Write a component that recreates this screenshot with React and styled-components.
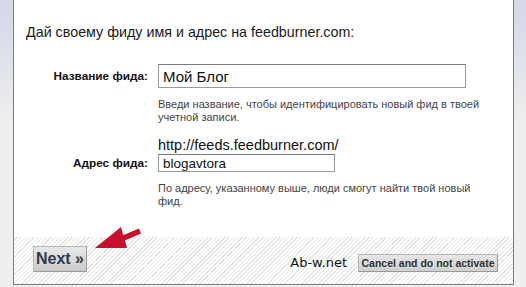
import React from 'react';
import styled, { createGlobalStyle } from 'styled-components';

const GlobalStyle = createGlobalStyle`
  html, body {
    margin: 0;
    padding: 0;
  }
  body {
    width: 526px;
    height: 287px;
    overflow: hidden;
    background: linear-gradient(#d3d7e8 0, #e2e4ec 70px, #eeeeee 120px, #efefef 100%);
    font-family: 'Liberation Sans', Arial, sans-serif;
  }
`;

const Panel = styled.div`
  margin-left: 13px;
  width: 499px;
  height: 284px;
  background: #ffffff;
  border: 1px solid #7c7c7c;
  border-top: none;
  display: flex;
  flex-direction: column;
`;

const Content = styled.div`
  flex: 1;
  padding: 23px 12px 0 12px;
`;

const Title = styled.div`
  font-size: 14.3px;
  line-height: 18px;
  color: #1a1a1a;
  margin-bottom: 23px;
`;

const Field = styled.div`
  display: grid;
  grid-template-columns: 122px 1fr;
  column-gap: 10px;
  align-items: center;
  margin-bottom: ${(p) => p.$gap || 0}px;
`;

const Label = styled.label`
  grid-column: 1;
  text-align: right;
  font-size: 11.8px;
  font-weight: bold;
  color: #111;
`;

const Prefix = styled.div`
  grid-column: 2;
  font-size: 14.5px;
  line-height: 18px;
  color: #111;
`;

const Input = styled.input`
  grid-column: 2;
  box-sizing: border-box;
  width: ${(p) => p.$width}px;
  height: ${(p) => p.$height}px;
  border: 1px solid #9a9a9a;
  border-top-color: #7a7a7a;
  padding: 0 4px;
  font-family: 'Liberation Sans', Arial, sans-serif;
  font-size: ${(p) => p.$size}px;
  color: #111;
  background: #fff;
  outline: none;
`;

const Help = styled.div`
  grid-column: 2;
  font-size: 11px;
  line-height: 13px;
  color: #444;
  margin-top: ${(p) => p.$top}px;
  width: 335px;
`;

const Footer = styled.div`
  position: relative;
  height: 47px;
  box-sizing: border-box;
  padding: 0 15px 12px 19px;
  display: flex;
  align-items: flex-end;
  background: repeating-linear-gradient(135deg, #ffffff 0 2px, #e4e4e4 2px 3px);
`;

const NextButton = styled.button`
  width: 54px;
  height: 26px;
  padding: 0;
  font-family: 'Liberation Sans', Arial, sans-serif;
  font-size: 16px;
  font-weight: bold;
  color: #323a48;
  background: linear-gradient(#e8e8e8, #cbcbcb);
  border: 1px solid #b8b8b8;
  border-right-color: #9c9c9c;
  border-bottom-color: #9c9c9c;
  cursor: pointer;
`;

const Spacer = styled.div`
  flex: 1;
`;

const Brand = styled.span`
  font-family: 'DejaVu Sans', Verdana, sans-serif;
  font-size: 13px;
  color: #111;
  margin-right: 11px;
  padding-bottom: 2px;
`;

const CancelButton = styled.button`
  width: 140px;
  height: 18px;
  padding: 0;
  font-family: 'Liberation Sans', Arial, sans-serif;
  font-size: 10.5px;
  font-weight: bold;
  color: #333;
  background: linear-gradient(#e6e6e6, #cfcfcf);
  border: 1px solid #b5b5b5;
  border-right-color: #9a9a9a;
  border-bottom-color: #9a9a9a;
  cursor: pointer;
`;

const Arrow = styled.svg`
  position: absolute;
  left: 78px;
  top: -14px;
  overflow: visible;
`;

export default function App() {
  return (
    <>
      <GlobalStyle />
      <Panel>
        <Content>
          <Title>Дай своему фиду имя и адрес на feedburner.com:</Title>
          <Field $gap={12}>
            <Label>Название фида:</Label>
            <Input $width={308} $height={24} $size={15} defaultValue="Мой Блог" />
            <Help $top={10}>
              Введи название, чтобы идентифицировать новый фид в твоей учетной записи.
            </Help>
          </Field>
          <Field>
            <Prefix>http://feeds.feedburner.com/</Prefix>
            <Label>Адрес фида:</Label>
            <Input $width={177} $height={18} $size={13.5} defaultValue="blogavtora" />
            <Help $top={10}>
              По адресу, указанному выше, люди смогут найти твой новый фид.
            </Help>
          </Field>
        </Content>
        <Footer>
          <NextButton>Next »</NextButton>
          <Arrow width="52" height="30" viewBox="0 0 52 30">
            <polygon points="3,25 29,4 35,25" fill="#c8102e" />
            <line x1="27" y1="17" x2="48" y2="8" stroke="#c8102e" strokeWidth="5.5" />
          </Arrow>
          <Spacer />
          <Brand>Ab-w.net</Brand>
          <CancelButton>Cancel and do not activate</CancelButton>
        </Footer>
      </Panel>
    </>
  );
}
